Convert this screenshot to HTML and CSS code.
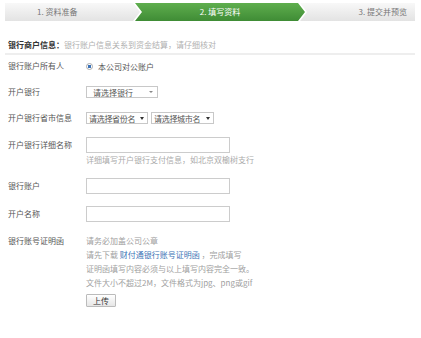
FILE: index.html
```html
<!DOCTYPE html>
<html lang="zh-CN">
<head>
  <meta charset="UTF-8" />
  <title>填写资料</title>
  <link rel="stylesheet" href="styles.css">
</head>
<body>
  <div class="page">
    <div class="steps">
      <div class="step step-first">1. 资料准备</div>
      <div class="step-on"><div class="step-on-inner">2. 填写资料</div></div>
      <div class="step step-last">3. 提交并预览</div>
    </div>

    <div class="section-title">
      <b>银行商户信息：</b><span class="muted">银行账户信息关系到资金结算，请仔细核对</span>
    </div>

    <div class="form">
      <div class="row h14">
        <label>银行账户所有人</label>
        <div class="field"><span class="radio"></span>本公司对公账户</div>
      </div>
      <div class="row h14">
        <label>开户银行</label>
        <div class="field">
          <span class="select sel-bank"><span>请选择银行</span><i class="caret light"></i></span>
        </div>
      </div>
      <div class="row h14">
        <label>开户银行省市信息</label>
        <div class="field">
          <span class="select sel-prov"><span>请选择省份名</span><i class="caret"></i></span>
          <span class="select sel-city"><span>请选择城市名</span><i class="caret"></i></span>
        </div>
      </div>
      <div class="row h16">
        <label>开户银行详细名称</label>
        <div class="field col">
          <input type="text" class="text-input">
          <div class="help">详细填写开户银行支付信息，如北京双榆树支行</div>
        </div>
      </div>
      <div class="row h16">
        <label>银行账户</label>
        <div class="field"><input type="text" class="text-input"></div>
      </div>
      <div class="row h16">
        <label>开户名称</label>
        <div class="field"><input type="text" class="text-input"></div>
      </div>
      <div class="row h14">
        <label>银行账号证明函</label>
        <div class="field col notes">
          <div>请务必加盖公司公章</div>
          <div>请先下载 <a href="#">财付通银行账号证明函</a> ，完成填写</div>
          <div>证明函填写内容必须与以上填写内容完全一致。</div>
          <div>文件大小不超过2M，文件格式为jpg、png或gif</div>
          <button class="upload">上传</button>
        </div>
      </div>
    </div>
  </div>
</body>
</html>
```

FILE: styles.css
```css
body {
  margin: 0;
  font-family: "Noto Sans CJK SC", "Noto Sans", sans-serif;
  font-size: 8px;
  color: #555;
  background: #fff;
}
.page {
  padding: 3px 6px 0 5px;
}
.steps {
  display: flex;
  height: 18px;
  line-height: 18px;
  width: 410px;
}
.step {
  background: linear-gradient(#f8f8f8, #e3e3e3);
  color: #777;
}
.step-first {
  flex: 0 0 135px;
  padding-left: 32px;
  box-sizing: border-box;
}
.step-on {
  flex: 0 0 174px;
  margin-left: -7px;
  padding: 0 2px;
  box-sizing: border-box;
  background: #fff;
  clip-path: polygon(0 0, calc(100% - 7px) 0, 100% 50%, calc(100% - 7px) 100%, 0 100%, 7px 50%);
  z-index: 1;
}
.step-on-inner {
  height: 100%;
  background: linear-gradient(#5fae4e, #3f8c35);
  color: #fff;
  text-align: center;
  clip-path: polygon(0 0, calc(100% - 7px) 0, 100% 50%, calc(100% - 7px) 100%, 0 100%, 7px 50%);
}
.step-last {
  flex: 1;
  margin-left: -7px;
  padding-right: 8px;
  text-align: right;
}
.section-title {
  margin-top: 17px;
  padding: 0 0 1px 3px;
  line-height: 14px;
  border-bottom: 2px solid #eee;
  width: 407px;
}
.section-title b {
  color: #333;
}
.muted {
  color: #b0b0b0;
}
.form {
  display: flex;
  flex-direction: column;
  gap: 12px;
  margin-top: 4px;
  padding-left: 3px;
}
.row {
  display: grid;
  grid-template-columns: 78px 1fr;
  align-items: start;
}
.h14 label { line-height: 14px; }
.h16 label { line-height: 16px; }
.field {
  display: flex;
  align-items: center;
  gap: 3px;
  min-height: 14px;
}
.field.col {
  flex-direction: column;
  align-items: flex-start;
  gap: 0;
}
.radio {
  width: 5px;
  height: 5px;
  border: 1px solid #aaa;
  border-radius: 50%;
  margin: 0 2px 0 0;
  background: radial-gradient(circle, #3b72b8 0 1.5px, #fff 2px);
}
.select {
  display: flex;
  align-items: center;
  justify-content: space-between;
  height: 12px;
  box-sizing: border-box;
  border: 1px solid #c8c8c8;
  background: #fff;
  color: #555;
  white-space: nowrap;
}
.sel-bank {
  width: 72px;
  padding: 0 4px 0 6px;
}
.sel-prov,
.sel-city {
  padding: 0 3px 0 2px;
  letter-spacing: -0.3px;
}
.sel-prov { width: 62px; }
.sel-city { width: 63px; }
.caret {
  flex: none;
  width: 0;
  height: 0;
  border-left: 2px solid transparent;
  border-right: 2px solid transparent;
  border-top: 3px solid #333;
}
.caret.light {
  border-top-color: #888;
  border-top-width: 2px;
}
.text-input {
  width: 144px;
  height: 16px;
  box-sizing: border-box;
  border: 1px solid #ccc;
  margin: 0;
  padding: 0 3px;
  font: inherit;
}
.help {
  color: #aaa;
  line-height: 12px;
  margin-top: 1px;
}
.notes {
  color: #a0a0a0;
  line-height: 14px;
}
.notes a {
  color: #3a72b6;
  text-decoration: none;
}
.upload {
  margin-top: 4px;
  width: 30px;
  height: 13px;
  padding: 0;
  border: 1px solid #bbb;
  border-radius: 1px;
  background: linear-gradient(#fff, #e6e6e6);
  font: inherit;
  color: #333;
  line-height: 11px;
}
```
